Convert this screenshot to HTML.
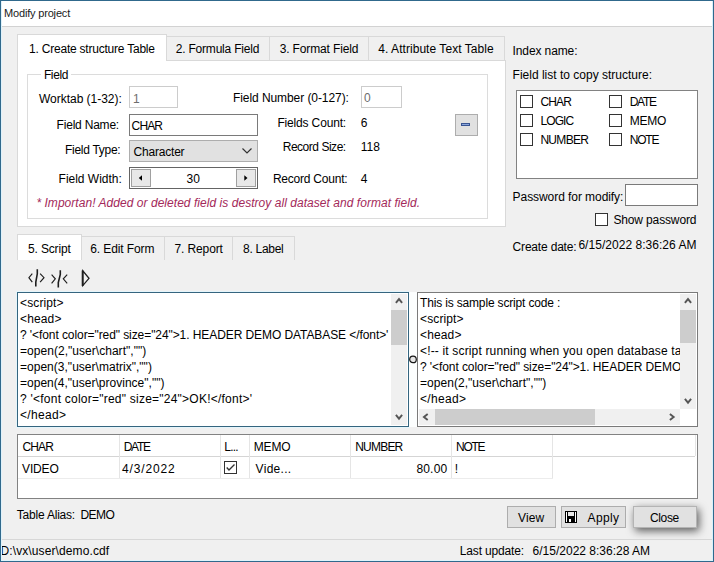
<!DOCTYPE html>
<html><head><meta charset="utf-8">
<style>
*{box-sizing:border-box;margin:0;padding:0}
html,body{width:714px;height:562px;overflow:hidden;background:#f0f0f0;font-family:"Liberation Sans",sans-serif;font-size:12px;color:#000}
.a{position:absolute}
.t{position:absolute;white-space:pre;line-height:16px;font-size:12px}
.tab{position:absolute;background:#f0f0f0;border:1px solid #d9d9d9;border-bottom:none}
.sel{background:#fff}
.btn{position:absolute;background:#e1e1e1;border:1px solid #adadad}
.cb{position:absolute;width:13px;height:13px;border:1px solid #333;background:#fff}
.code{position:absolute;white-space:pre;line-height:16px;font-size:12px}
</style></head><body>
<!-- window frame -->
<div class="a" style="left:0;top:0;width:714px;height:26px;background:#fff"></div>
<div class="a" style="left:0;top:26px;width:714px;height:1px;background:#d2d2d2"></div>

<!-- tab control 1 -->
<div class="a" style="left:17px;top:60px;width:489px;height:167px;background:#fff;border:1px solid #d9d9d9"></div>
<div class="tab" style="left:166px;top:36px;width:104px;height:25px;border-bottom:1px solid #d9d9d9"></div>
<div class="tab" style="left:269px;top:36px;width:100px;height:25px;border-bottom:1px solid #d9d9d9"></div>
<div class="tab" style="left:368px;top:36px;width:137px;height:25px;border-bottom:1px solid #d9d9d9"></div>
<div class="tab sel" style="left:17px;top:34px;width:150px;height:27px"></div>

<!-- group box -->
<div class="a" style="left:27px;top:74px;width:461px;height:145px;border:1px solid #dcdcdc"></div>
<div class="a" style="left:41px;top:72px;width:30px;height:4px;background:#fff"></div>

<!-- inputs -->
<div class="a" style="left:129px;top:86px;width:49px;height:22px;background:#fff;border:1px solid #cccccc"></div>
<div class="a" style="left:361px;top:86px;width:41px;height:22px;background:#fff;border:1px solid #cccccc"></div>
<div class="a" style="left:129px;top:114px;width:129px;height:22px;background:#fff;border:1px solid #7a7a7a"></div>
<div class="a" style="left:129px;top:140px;width:129px;height:22px;background:#e1e1e1;border:1px solid #adadad"></div>
<svg class="a" style="left:242px;top:148px" width="11" height="7"><path d="M0.5 0.5 L5 5 L9.5 0.5" fill="none" stroke="#333" stroke-width="1.2"/></svg>
<!-- spinner -->
<div class="a" style="left:129px;top:167px;width:129px;height:22px;background:#fff;border:1px solid #646464"></div>
<div class="btn" style="left:131px;top:169px;width:20px;height:18px;background:#e8e8e8;border-color:#a0a0a0"></div>
<div class="btn" style="left:236px;top:169px;width:20px;height:18px;background:#e8e8e8;border-color:#a0a0a0"></div>
<svg class="a" style="left:138px;top:175px" width="6" height="7"><path d="M4 0.3 L0.8 3 L4 5.7 Z" fill="#000"/></svg>
<svg class="a" style="left:244px;top:175px" width="6" height="7"><path d="M0.3 0.3 L3.5 3 L0.3 5.7 Z" fill="#000"/></svg>
<!-- minus button -->
<div class="btn" style="left:455px;top:114px;width:23px;height:22px"></div>
<div class="a" style="left:461px;top:123px;width:9px;height:3px;background:#8aa6dc;border:1px solid #3a5592"></div>

<!-- right list -->
<div class="a" style="left:516px;top:90px;width:182px;height:89px;background:#fff;border:1px solid #828282"></div>
<div class="cb" style="left:520px;top:95px"></div>
<div class="cb" style="left:520px;top:114px"></div>
<div class="cb" style="left:520px;top:133px"></div>
<div class="cb" style="left:609px;top:95px"></div>
<div class="cb" style="left:609px;top:114px"></div>
<div class="cb" style="left:609px;top:133px"></div>
<div class="a" style="left:625px;top:184px;width:73px;height:22px;background:#fff;border:1px solid #7a7a7a"></div>
<div class="cb" style="left:595px;top:213px"></div>

<!-- tab control 2 -->
<div class="tab" style="left:81px;top:236px;width:84px;height:24px"></div>
<div class="tab" style="left:164px;top:236px;width:69px;height:24px"></div>
<div class="tab" style="left:232px;top:236px;width:63px;height:24px"></div>
<div class="tab sel" style="left:17px;top:234px;width:65px;height:26px"></div>

<!-- icons -->
<svg class="a" style="left:0;top:260px" width="100" height="32">
 <g fill="none" stroke="#1e1e1e" stroke-width="1.15" stroke-linecap="butt">
 <path d="M32.3 13.6 L28.9 17.7 L32.3 22.1"/>
 <path d="M37.3 9.3 L37.3 13.8 L35.8 22 L35.8 26.4" stroke-width="1.6"/>
 <path d="M40.1 13.6 L44.0 17.7 L40.1 22.1"/>
 <path d="M51.6 14.6 L55.3 18.8 L51.6 23.3"/>
 <path d="M60.3 10.2 L60.3 14.5 L58.3 22.5 L58.3 27.4" stroke-width="1.6"/>
 <path d="M67.2 14.6 L63.3 18.8 L67.2 23.3"/>
 <path d="M82.8 10.8 L82.8 25.6 L89.0 18.3 Z" stroke-linejoin="miter" stroke-width="1.3"/><path d="M82.6 10.5 L82.6 26" stroke-width="1.8"/>
 </g>
</svg>

<!-- left code box -->
<div class="a" style="left:17px;top:292px;width:392px;height:135px;background:#fff;border:1px solid #35657f;box-shadow:0 0 0 1px #e4f5fb;overflow:hidden">
 <div class="code" style="left:2px;top:2px;letter-spacing:0.130px;">&lt;script&gt;</div>
<div class="code" style="left:2px;top:18px;letter-spacing:0.136px;">&lt;head&gt;</div>
<div class="code" style="left:2px;top:34px;letter-spacing:-0.080px;">? '&lt;font color="red" size="24"&gt;1. HEADER DEMO DATABASE &lt;/font&gt;'</div>
<div class="code" style="left:2px;top:50px;letter-spacing:0.037px;">=open(2,"user\chart","")</div>
<div class="code" style="left:2px;top:66px;letter-spacing:0.020px;">=open(3,"user\matrix","")</div>
<div class="code" style="left:2px;top:82px;letter-spacing:0.014px;">=open(4,"user\province","")</div>
<div class="code" style="left:2px;top:98px;letter-spacing:0.234px;">? '&lt;font color="red" size="24"&gt;OK!&lt;/font&gt;'</div>
<div class="code" style="left:2px;top:114px;letter-spacing:0.309px;">&lt;/head&gt;</div>
 <div class="a" style="left:373px;top:1px;width:16px;height:131px;background:#f0f0f0"></div>
 <div class="a" style="left:373px;top:17px;width:16px;height:35px;background:#cdcdcd"></div>
 <svg class="a" style="left:377px;top:4px" width="9" height="7"><path d="M0.9 5.9 L4 2.1 L7.1 5.9" fill="none" stroke="#555" stroke-width="1.9"/></svg>
 <svg class="a" style="left:377px;top:121px" width="9" height="7"><path d="M0.9 0.9 L4 4.7 L7.1 0.9" fill="none" stroke="#555" stroke-width="1.9"/></svg>
</div>
<div class="a" style="left:409px;top:292px;width:8px;height:135px;background:#fcfefe"></div>
<svg class="a" style="left:408px;top:354px" width="11" height="11"><circle cx="5" cy="5.4" r="3.3" fill="#e6e6e6" stroke="#151515" stroke-width="1.2"/></svg>

<!-- right code box -->
<div class="a" style="left:417px;top:292px;width:281px;height:135px;background:#fff;border:1px solid #7a7a7a;overflow:hidden">
 <div class="code" style="left:2px;top:2px;letter-spacing:-0.164px;">This is sample script code :</div>
<div class="code" style="left:2px;top:18px;letter-spacing:0.130px;">&lt;script&gt;</div>
<div class="code" style="left:2px;top:34px;letter-spacing:0.136px;">&lt;head&gt;</div>
<div class="code" style="left:2px;top:50px;letter-spacing:0.163px;">&lt;!-- it script running when you open database table</div>
<div class="code" style="left:2px;top:66px;letter-spacing:-0.080px;">? '&lt;font color="red" size="24"&gt;1. HEADER DEMO DATABASE &lt;/font&gt;'</div>
<div class="code" style="left:2px;top:82px;letter-spacing:0.037px;">=open(2,"user\chart","")</div>
<div class="code" style="left:2px;top:98px;letter-spacing:0.309px;">&lt;/head&gt;</div>
 <div class="a" style="left:262px;top:0;width:18px;height:132px;background:#fff"></div>
 <div class="a" style="left:0;top:116px;width:262px;height:17px;background:#fff"></div>
 <div class="a" style="left:262px;top:1px;width:16px;height:115px;background:#f0f0f0"></div>
 <div class="a" style="left:262px;top:17px;width:16px;height:33px;background:#cdcdcd"></div>
 <svg class="a" style="left:266px;top:4px" width="9" height="7"><path d="M0.9 5.9 L4 2.1 L7.1 5.9" fill="none" stroke="#555" stroke-width="1.9"/></svg>
 <svg class="a" style="left:266px;top:105px" width="9" height="7"><path d="M0.9 0.9 L4 4.7 L7.1 0.9" fill="none" stroke="#555" stroke-width="1.9"/></svg>
 <div class="a" style="left:1px;top:116px;width:261px;height:16px;background:#f0f0f0"></div>
 <div class="a" style="left:17px;top:116px;width:160px;height:16px;background:#cdcdcd"></div>
 <svg class="a" style="left:4px;top:120px" width="7" height="9"><path d="M5.7 0.9 L1.9 4 L5.7 7.1" fill="none" stroke="#555" stroke-width="1.9"/></svg>
 <svg class="a" style="left:251px;top:120px" width="7" height="9"><path d="M0.9 0.9 L4.7 4 L0.9 7.1" fill="none" stroke="#555" stroke-width="1.9"/></svg>
</div>

<!-- grid -->
<div class="a" style="left:17px;top:434px;width:681px;height:65px;background:#fff;border:1px solid #828282"></div>
<div class="a" style="left:18px;top:456px;width:677px;height:1px;background:#d5d5d5"></div>
<div class="a" style="left:18px;top:478px;width:535px;height:1px;background:#ececec"></div>
<div class="a" style="left:119px;top:435px;width:1px;height:43px;background:#e5e5e5"></div>
<div class="a" style="left:220px;top:435px;width:1px;height:43px;background:#e5e5e5"></div>
<div class="a" style="left:249px;top:435px;width:1px;height:43px;background:#e5e5e5"></div>
<div class="a" style="left:350px;top:435px;width:1px;height:43px;background:#e5e5e5"></div>
<div class="a" style="left:451px;top:435px;width:1px;height:43px;background:#e5e5e5"></div>
<div class="a" style="left:552px;top:435px;width:1px;height:43px;background:#e5e5e5"></div>
<div class="a" style="left:695px;top:435px;width:1px;height:21px;background:#e5e5e5"></div>
<svg class="a" style="left:224px;top:461px" width="14" height="14"><rect x="0.5" y="0.5" width="12" height="12" fill="#fff" stroke="#333"/><path d="M2.7 6.6 L5 8.9 L10.5 3.5" fill="none" stroke="#333" stroke-width="1.4"/></svg>

<!-- buttons -->
<div class="btn" style="left:507px;top:506px;width:49px;height:22px"></div>
<div class="btn" style="left:561px;top:506px;width:65px;height:22px"></div>
<div class="btn" style="left:633px;top:506px;width:64px;height:22px;border-color:#b4b4b4;box-shadow:2px 3px 8px rgba(0,0,0,0.62)"></div>
<svg class="a" style="left:565px;top:511px" width="12" height="12" shape-rendering="crispEdges">
 <rect x="0" y="0" width="12" height="12" fill="#000"/>
 <rect x="1" y="1" width="1" height="10" fill="#fff"/>
 <rect x="10" y="1" width="1" height="10" fill="#fff"/>
 <rect x="3" y="1" width="6" height="4" fill="#e6e6e6"/>
 <rect x="4" y="8" width="2" height="3" fill="#fff"/>
</svg>

<!-- status -->
<div class="a" style="left:0;top:539px;width:714px;height:1px;background:#d7d7d7"></div>

<div class="t" style="left:4.1px;top:6px;font-size:11px;line-height:15px;letter-spacing:-0.183px;color:#1a1a1a">Modify project</div>
<div class="t" style="left:29.1px;top:41px;letter-spacing:-0.220px;">1. Create structure Table</div>
<div class="t" style="left:175.7px;top:41px;letter-spacing:-0.200px;">2. Formula Field</div>
<div class="t" style="left:279.7px;top:41px;letter-spacing:-0.136px;">3. Format Field</div>
<div class="t" style="left:378.3px;top:41px;letter-spacing:0.045px;">4. Attribute Text Table</div>
<div class="t" style="left:43.9px;top:67px;letter-spacing:-0.354px;">Field</div>
<div class="t" style="left:39.0px;top:91px;letter-spacing:-0.024px;">Worktab (1-32):</div>
<div class="t" style="left:132.9px;top:91px;color:#6d6d6d">1</div>
<div class="t" style="left:233.0px;top:90px;letter-spacing:-0.074px;">Field Number (0-127):</div>
<div class="t" style="left:363.9px;top:90px;color:#6d6d6d">0</div>
<div class="t" style="left:56.6px;top:117px;letter-spacing:-0.209px;">Field Name:</div>
<div class="t" style="left:131.6px;top:118px;letter-spacing:-0.872px;">CHAR</div>
<div class="t" style="left:277.4px;top:115px;letter-spacing:-0.159px;">Fields Count:</div>
<div class="t" style="left:360.7px;top:115px;">6</div>
<div class="t" style="left:65.0px;top:142px;letter-spacing:-0.288px;">Field Type:</div>
<div class="t" style="left:133.6px;top:144px;letter-spacing:-0.211px;">Character</div>
<div class="t" style="left:282.7px;top:139px;letter-spacing:-0.473px;">Record Size:</div>
<div class="t" style="left:360.7px;top:139px;">118</div>
<div class="t" style="left:58.6px;top:171px;letter-spacing:-0.014px;">Field Width:</div>
<div class="t" style="left:186.4px;top:171px;letter-spacing:0.241px;">30</div>
<div class="t" style="left:272.9px;top:171px;letter-spacing:-0.223px;">Record Count:</div>
<div class="t" style="left:360.7px;top:171px;">4</div>
<div class="t" style="left:36.4px;top:195px;letter-spacing:0.043px;font-style:italic;color:#a3295a">* Importan! Added or deleted field is destroy all dataset and format field.</div>
<div class="t" style="left:512.6px;top:43px;letter-spacing:-0.115px;">Index name:</div>
<div class="t" style="left:512.6px;top:67px;">Field list to copy structure:</div>
<div class="t" style="left:540.4px;top:94px;letter-spacing:-0.839px;">CHAR</div>
<div class="t" style="left:540.4px;top:113px;letter-spacing:-0.886px;">LOGIC</div>
<div class="t" style="left:540.4px;top:132px;letter-spacing:-0.683px;">NUMBER</div>
<div class="t" style="left:629.8px;top:94px;letter-spacing:-1.342px;">DATE</div>
<div class="t" style="left:629.8px;top:113px;letter-spacing:-0.248px;">MEMO</div>
<div class="t" style="left:629.8px;top:132px;letter-spacing:-1.215px;">NOTE</div>
<div class="t" style="left:512.6px;top:189px;letter-spacing:-0.066px;">Password for modify:</div>
<div class="t" style="left:613.4px;top:212px;letter-spacing:-0.135px;">Show password</div>
<div class="t" style="left:512.6px;top:239px;letter-spacing:-0.186px;">Create date:</div>
<div class="t" style="left:578.4px;top:237px;letter-spacing:0.035px;">6/15/2022 8:36:26 AM</div>
<div class="t" style="left:28.0px;top:241px;letter-spacing:-0.152px;">5. Script</div>
<div class="t" style="left:90.2px;top:241px;letter-spacing:-0.096px;">6. Edit Form</div>
<div class="t" style="left:174.5px;top:241px;letter-spacing:-0.120px;">7. Report</div>
<div class="t" style="left:243.1px;top:241px;letter-spacing:-0.300px;">8. Label</div>
<div class="t" style="left:22.5px;top:439px;letter-spacing:-0.872px;">CHAR</div>
<div class="t" style="left:123.8px;top:439px;letter-spacing:-1.342px;">DATE</div>
<div class="t" style="left:224.2px;top:439px;letter-spacing:-0.729px;">L...</div>
<div class="t" style="left:253.7px;top:439px;letter-spacing:-0.148px;">MEMO</div>
<div class="t" style="left:355.2px;top:439px;letter-spacing:-0.783px;">NUMBER</div>
<div class="t" style="left:456.0px;top:439px;letter-spacing:-1.248px;">NOTE</div>
<div class="t" style="left:22.1px;top:461px;letter-spacing:-0.161px;">VIDEO</div>
<div class="t" style="left:122.0px;top:461px;letter-spacing:0.840px;">4/3/2022</div>
<div class="t" style="left:255.6px;top:461px;letter-spacing:0.298px;">Vide...</div>
<div class="t" style="left:416.4px;top:461px;letter-spacing:0.192px;">80.00</div>
<div class="t" style="left:454.7px;top:461px;">!</div>
<div class="t" style="left:16.8px;top:507px;letter-spacing:-0.209px;">Table Alias:</div>
<div class="t" style="left:80.4px;top:507px;letter-spacing:-0.500px;">DEMO</div>
<div class="t" style="left:518.0px;top:510px;letter-spacing:0.134px;">View</div>
<div class="t" style="left:587.6px;top:510px;letter-spacing:0.367px;">Apply</div>
<div class="t" style="left:650.0px;top:510px;letter-spacing:-0.372px;">Close</div>
<div class="t" style="left:0.5px;top:543px;letter-spacing:0.105px;">D:\vx\user\demo.cdf</div>
<div class="t" style="left:459.8px;top:543px;letter-spacing:-0.169px;">Last update:</div>
<div class="t" style="left:532.6px;top:543px;">6/15/2022 8:36:28 AM</div>

<!-- frame borders -->
<div class="a" style="left:0;top:0;width:714px;height:1px;background:#30698c"></div>
<div class="a" style="left:0;top:0;width:1px;height:562px;background:#30698c"></div>
<div class="a" style="left:1px;top:1px;width:1px;height:560px;background:#dff2fb"></div>
<div class="a" style="left:713px;top:0;width:1px;height:562px;background:#30698c"></div>
<div class="a" style="left:712px;top:1px;width:1px;height:560px;background:#d6f0fb"></div>
<div class="a" style="left:1px;top:560px;width:712px;height:1px;background:#dff5fd"></div>
<div class="a" style="left:0;top:561px;width:714px;height:1px;background:#30698c"></div>
</body></html>
